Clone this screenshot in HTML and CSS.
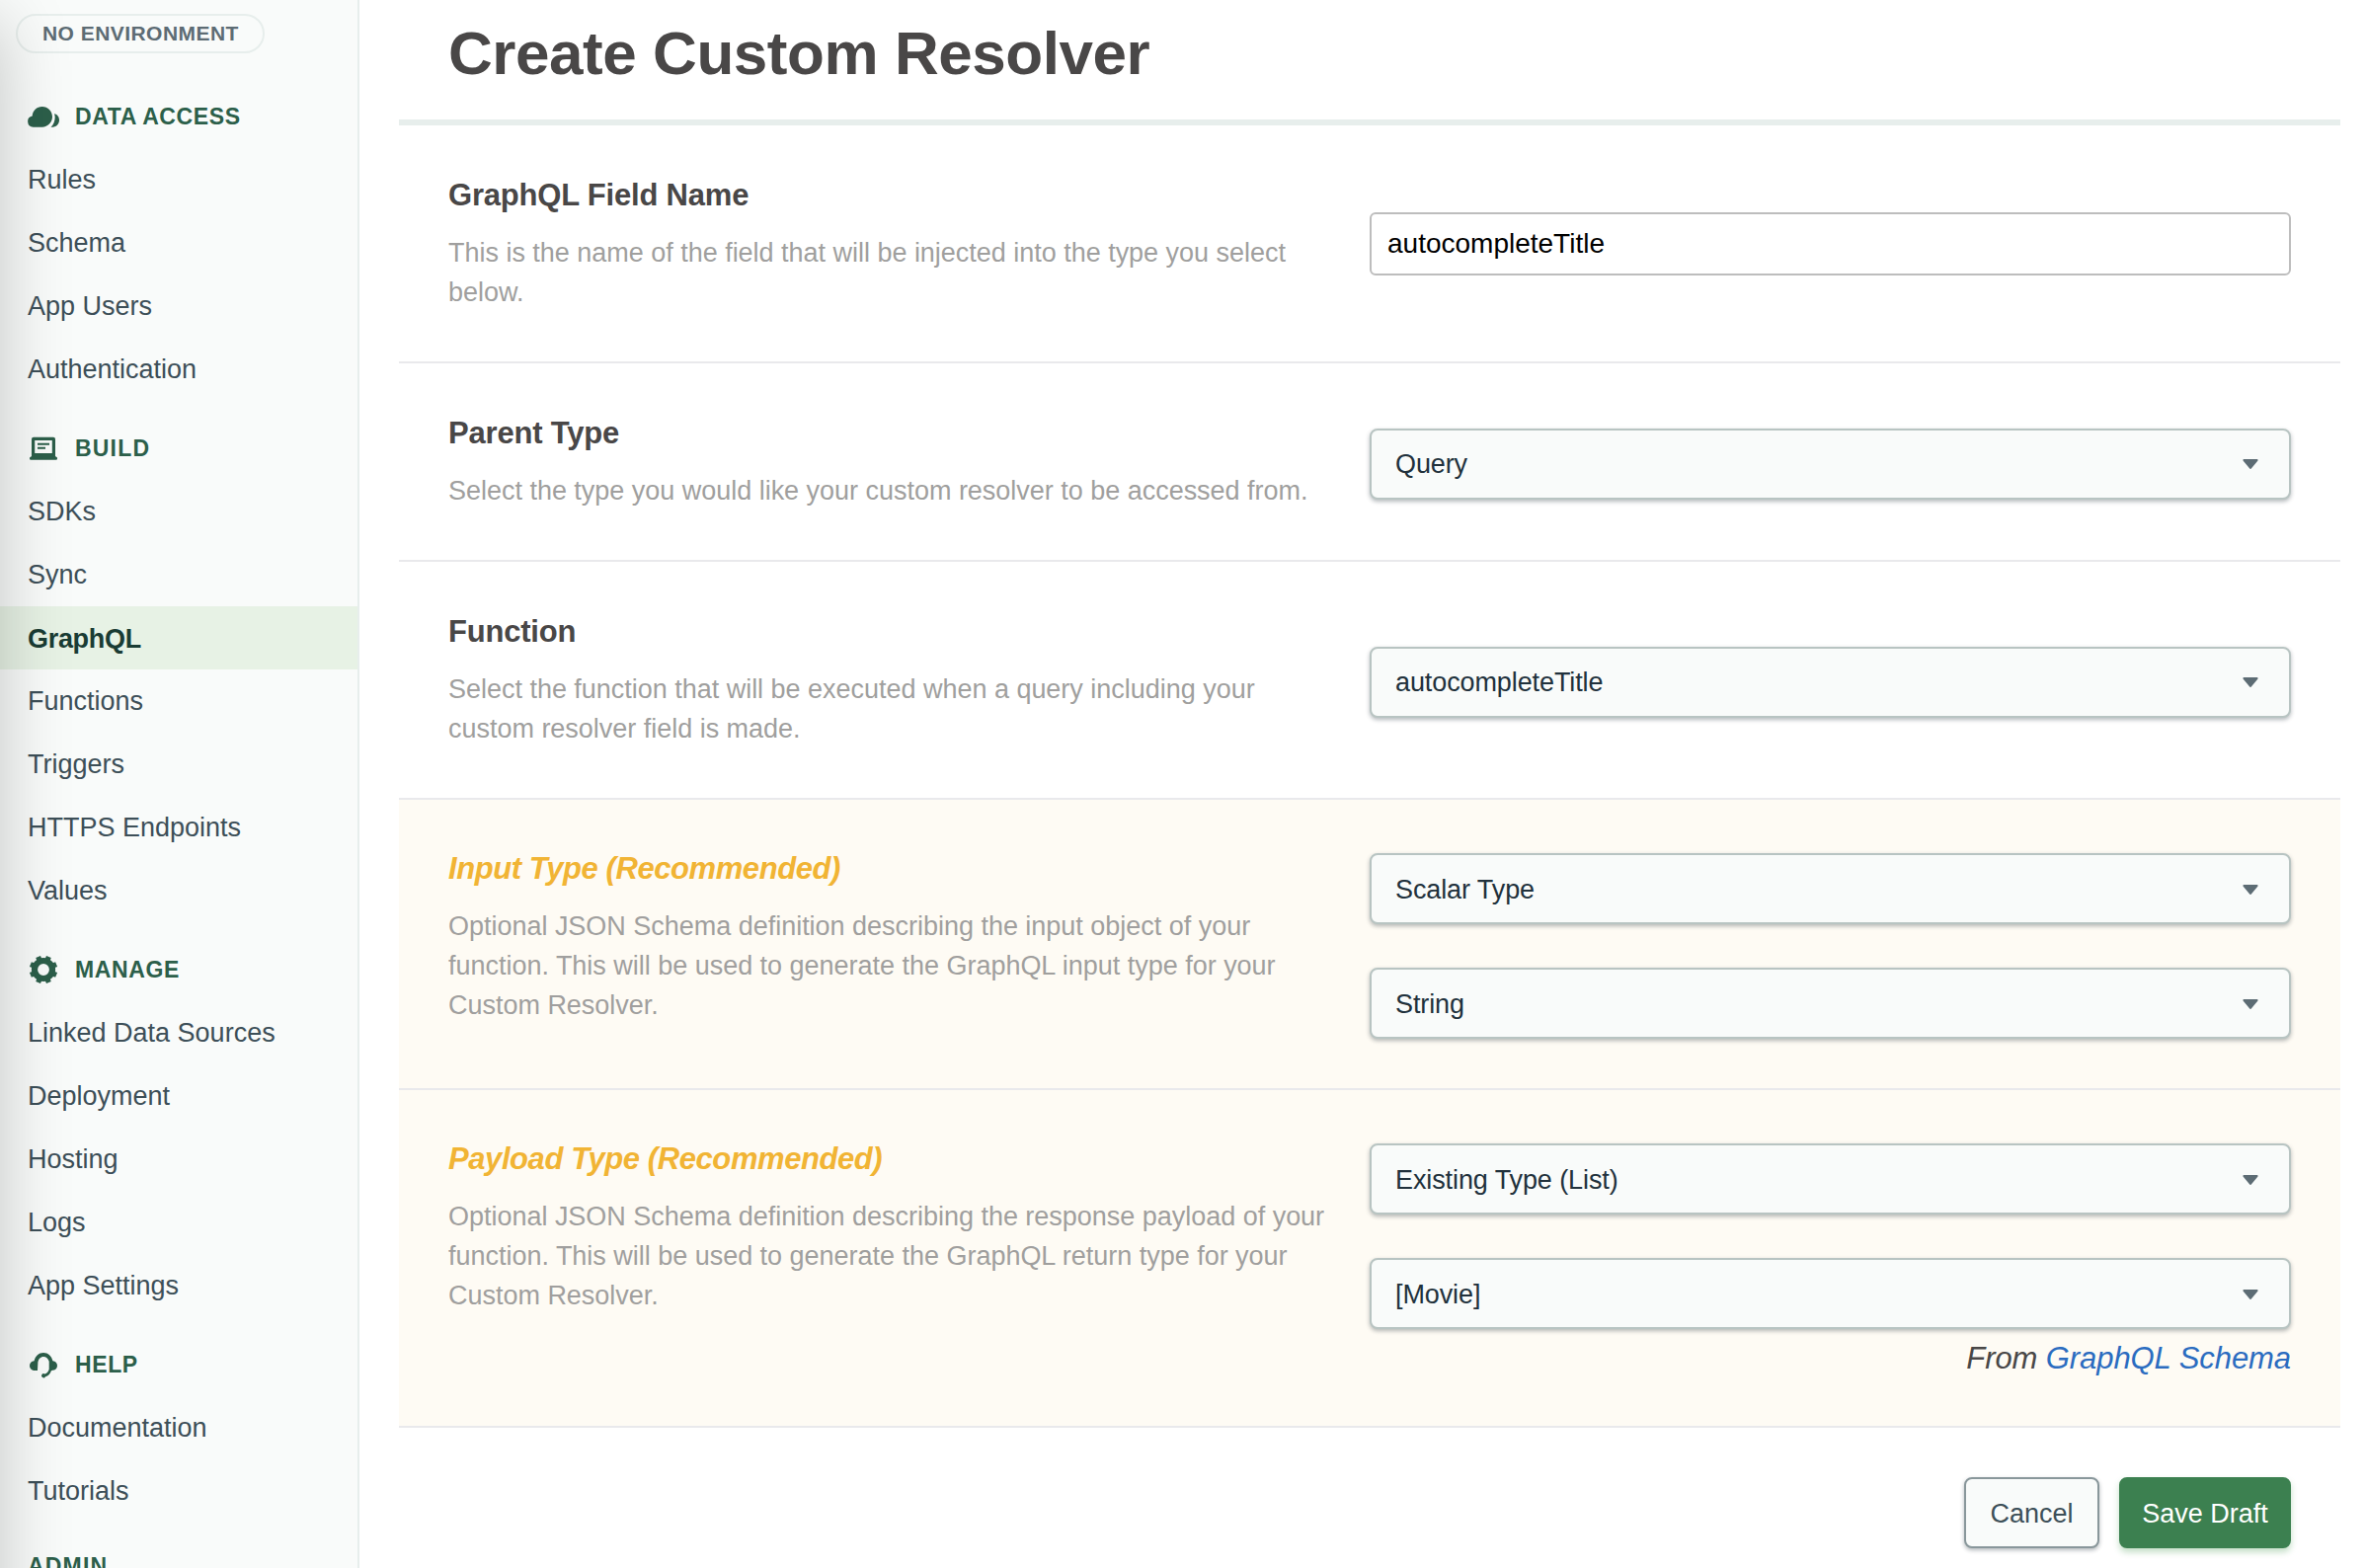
FILE: index.html
```html
<!DOCTYPE html>
<html lang="en">
<head>
<meta charset="utf-8">
<title>Create Custom Resolver</title>
<link rel="stylesheet" href="styles.css">
</head>
<body>
<div class="app">
  <nav class="sidebar">
    <div class="env">NO ENVIRONMENT</div>
    <div class="group group-first">
      <svg class="icon" viewBox="0 0 32 32" fill="currentColor"><path d="M5.600 26.700A5.600 5.600 0 0 1 4.700 15.600C4.900 10.200 9.300 6 14.700 6 20.400 6 25 10.600 25 16.300s-4.600 10.400-10.300 10.400z"/><path d="M27 13.300c3 .5 5 3.100 5 6.300 0 4-2.800 7.100-6.600 7.100h-1.900c2.700-2.400 4.200-6 4.200-9.900 0-1.300-.3-2.400-.7-3.500z"/></svg>
      <span>DATA ACCESS</span>
    </div>
    <a class="link">Rules</a>
    <a class="link">Schema</a>
    <a class="link">App Users</a>
    <a class="link">Authentication</a>
    <div class="group group-short">
      <svg class="icon" viewBox="0 0 32 32"><path fill="currentColor" fill-rule="evenodd" d="M6 4.800h20a2 2 0 0 1 2 2V24l2 1.500v1a1.200 1.200 0 0 1-1.200 1.200H3.200A1.200 1.200 0 0 1 2 26.500v-1L4 24V6.800a2 2 0 0 1 2-2zM7.200 8v12.900h17.600V8z"/><path fill="currentColor" d="M10 10.700h12v2H10zM10 14.700h8v2h-8z"/></svg>
      <span>BUILD</span>
    </div>
    <a class="link">SDKs</a>
    <a class="link">Sync</a>
    <a class="link active">GraphQL</a>
    <a class="link">Functions</a>
    <a class="link">Triggers</a>
    <a class="link">HTTPS Endpoints</a>
    <a class="link">Values</a>
    <div class="group">
      <svg class="icon" viewBox="-16 -16 32 32" fill="none" stroke="currentColor"><circle r="9" stroke-width="6.200"/><path stroke-width="5.200" d="M3.800 9.200l1.600 3.900M-3.800 9.200l-1.600 3.900M3.800-9.200l1.600-3.900M-3.800-9.200l-1.600-3.900M9.200 3.800l3.900 1.600M-9.200 3.800l-3.900 1.600M9.200-3.800l3.900-1.600M-9.200-3.800l-3.900-1.600"/></svg>
      <span>MANAGE</span>
    </div>
    <a class="link">Linked Data Sources</a>
    <a class="link">Deployment</a>
    <a class="link">Hosting</a>
    <a class="link">Logs</a>
    <a class="link">App Settings</a>
    <div class="group">
      <svg class="icon" viewBox="0 0 32 32"><path fill="currentColor" d="M6.600 12.200C7.800 7.300 11.400 4 16 4s8.200 3.300 9.400 8.200c2.700.4 4.600 2.200 4.600 4.700 0 2.700-2.100 4.700-4.800 4.900l-1.300.4c-1.100 3.400-3.200 5.400-5.900 6a2.100 2.100 0 1 1-.6-2.700c2.400-.9 4-2.700 4.300-5V12.800C20.600 9.800 18.800 8 16 8s-5 2.200-5.600 5.600L10 22H7c-2.900-.2-5-2.300-5-5.100 0-2.500 1.900-4.300 4.600-4.700z"/></svg>
      <span>HELP</span>
    </div>
    <a class="link">Documentation</a>
    <a class="link">Tutorials</a>
    <div class="group group-plain group-short"><span>ADMIN</span></div>
  </nav>

  <main class="main">
    <header class="title-bar"><h1 class="title">Create Custom Resolver</h1></header>

    <section class="row">
      <div class="info">
        <h2 class="label">GraphQL Field Name</h2>
        <p class="help">This is the name of the field that will be injected into the type you select<br>below.</p>
      </div>
      <div class="control"><input class="input" type="text" value="autocompleteTitle"></div>
    </section>

    <section class="row">
      <div class="info">
        <h2 class="label">Parent Type</h2>
        <p class="help">Select the type you would like your custom resolver to be accessed from.</p>
      </div>
      <div class="control selects">
        <div class="select"><span>Query</span><svg class="caret" viewBox="0 0 16 10"><path d="M1.500 0h13a1 1 0 0 1 .8 1.700L8.800 9.500a1 1 0 0 1-1.600 0L.7 1.700A1 1 0 0 1 1.500 0z"/></svg></div>
      </div>
    </section>

    <section class="row">
      <div class="info">
        <h2 class="label">Function</h2>
        <p class="help">Select the function that will be executed when a query including your<br>custom resolver field is made.</p>
      </div>
      <div class="control selects">
        <div class="select"><span>autocompleteTitle</span><svg class="caret" viewBox="0 0 16 10"><path d="M1.500 0h13a1 1 0 0 1 .8 1.700L8.800 9.500a1 1 0 0 1-1.600 0L.7 1.700A1 1 0 0 1 1.500 0z"/></svg></div>
      </div>
    </section>

    <section class="row recommended">
      <div class="info">
        <h2 class="label">Input Type (Recommended)</h2>
        <p class="help">Optional JSON Schema definition describing the input object of your<br>function. This will be used to generate the GraphQL input type for your<br>Custom Resolver.</p>
      </div>
      <div class="control selects">
        <div class="select"><span>Scalar Type</span><svg class="caret" viewBox="0 0 16 10"><path d="M1.500 0h13a1 1 0 0 1 .8 1.700L8.800 9.500a1 1 0 0 1-1.600 0L.7 1.700A1 1 0 0 1 1.500 0z"/></svg></div>
        <div class="select"><span>String</span><svg class="caret" viewBox="0 0 16 10"><path d="M1.500 0h13a1 1 0 0 1 .8 1.700L8.800 9.500a1 1 0 0 1-1.600 0L.7 1.700A1 1 0 0 1 1.500 0z"/></svg></div>
      </div>
    </section>

    <section class="row recommended">
      <div class="info">
        <h2 class="label">Payload Type (Recommended)</h2>
        <p class="help">Optional JSON Schema definition describing the response payload of your<br>function. This will be used to generate the GraphQL return type for your<br>Custom Resolver.</p>
      </div>
      <div class="control selects">
        <div class="select"><span>Existing Type (List)</span><svg class="caret" viewBox="0 0 16 10"><path d="M1.500 0h13a1 1 0 0 1 .8 1.700L8.800 9.500a1 1 0 0 1-1.600 0L.7 1.700A1 1 0 0 1 1.500 0z"/></svg></div>
        <div class="select"><span>[Movie]</span><svg class="caret" viewBox="0 0 16 10"><path d="M1.500 0h13a1 1 0 0 1 .8 1.700L8.800 9.500a1 1 0 0 1-1.600 0L.7 1.700A1 1 0 0 1 1.500 0z"/></svg></div>
        <p class="source">From <a class="source-link">GraphQL Schema</a></p>
      </div>
    </section>

    <footer class="actions">
      <button class="btn cancel">Cancel</button>
      <button class="btn save">Save Draft</button>
    </footer>
  </main>
</div>
</body>
</html>
```

FILE: styles.css
```css
* { box-sizing: border-box; }

body {
  margin: 0;
  height: 1588px;
  overflow: hidden;
  background: #fff;
  color: #494747;
  font-family: "Liberation Sans", Arial, sans-serif;
  font-size: 27px;
}

.app {
  display: flex;
  height: 1588px;
}

/* Sidebar */
.sidebar {
  position: relative;
  flex: none;
  width: 364px;
  height: 1588px;
  padding-top: 14px;
  overflow: hidden;
  background: #f9fbfa;
  border-right: 2px solid #e7eeec;
}

/* Soft shadow cast over the left edge */
.sidebar::after {
  content: "";
  position: absolute;
  left: -100px;
  top: 22px;
  width: 100px;
  height: 1800px;
  box-shadow: 0 0 72px rgba(0, 0, 0, 0.22);
  pointer-events: none;
}

.env {
  width: 252px;
  height: 40px;
  margin-left: 16px;
  border: 2px solid #e7eeec;
  border-radius: 20px;
  color: #5d6c74;
  font-size: 21px;
  font-weight: 700;
  letter-spacing: 0.45px;
  line-height: 36px;
  padding-left: 25px;
  white-space: nowrap;
}

.group {
  display: flex;
  align-items: center;
  gap: 16px;
  height: 80px;
  padding: 16px 0 0 28px;
  color: #2c5f4a;
  font-size: 23px;
  font-weight: 700;
  letter-spacing: 0.6px;
}

.group-first { margin-top: 16px; }
.group-plain { padding-top: 9px; }
.group-short { letter-spacing: 1.2px; }

.icon {
  flex: none;
  width: 32px;
  height: 32px;
}

.link {
  display: block;
  height: 64px;
  padding-left: 28px;
  color: #3d4f58;
  line-height: 65px;
}

.active {
  background: #e7f2e5;
  color: #1a3c34;
  font-weight: 700;
  letter-spacing: -0.3px;
  line-height: 66px;
}

/* Form */
.main {
  flex: none;
  width: 1966px;
  margin-left: 40px;
}

.title-bar {
  height: 127px;
  padding-left: 50px;
  border-bottom: 6px solid #e7eeec;
}

.title {
  margin: 0;
  font-size: 62px;
  letter-spacing: -0.45px;
  line-height: 108px;
}

.row {
  display: flex;
  justify-content: space-between;
  align-items: center;
  padding: 50px;
  border-bottom: 2px solid #e9e9ec;
}

.recommended {
  align-items: flex-start;
  background: #fefbf4;
}

.label {
  margin: 0 0 17px;
  font-size: 31px;
  letter-spacing: -0.2px;
  line-height: 42px;
}

.recommended .label {
  margin-bottom: 18px;
  color: #f1b434;
  font-style: italic;
  letter-spacing: -0.42px;
  line-height: 40px;
}

.help {
  margin: 0;
  color: #a09f9e;
  letter-spacing: -0.02px;
  line-height: 40px;
  white-space: nowrap;
}

.control {
  flex: none;
  width: 933px;
}

.input {
  display: block;
  width: 100%;
  height: 64px;
  padding: 0 16px;
  border: 2px solid #bdbdbd;
  border-radius: 6px;
  outline: none;
  background: #fff;
  color: #000;
  font: 28px "Liberation Sans", Arial, sans-serif;
}

.selects { padding-top: 4px; }

.select {
  display: flex;
  align-items: center;
  justify-content: space-between;
  height: 72px;
  padding: 1px 31px 0 24px;
  border: 2px solid #b8c4c2;
  border-radius: 8px;
  background: #f9fbfa;
  box-shadow: 0 2px 4px rgba(6, 22, 33, 0.3);
  color: #21313c;
  letter-spacing: -0.1px;
}

.select span { padding-top: 1px; }

.select + .select { margin-top: 44px; }

.caret {
  width: 16px;
  height: 10px;
  fill: #5d6c74;
}

.source {
  margin: 8px 0 0;
  font-size: 31px;
  font-style: italic;
  letter-spacing: -0.08px;
  line-height: 43px;
  height: 40px;
  text-align: right;
}

.source-link { color: #2b6cc0; }

.actions {
  display: flex;
  justify-content: flex-end;
  gap: 20px;
  padding: 50px 50px 0;
}

.btn {
  height: 72px;
  padding: 2px 0 0;
  border: 2px solid #89979b;
  border-radius: 8px;
  font: 27px "Liberation Sans", Arial, sans-serif;
}

.cancel {
  width: 137px;
  background: #f9fbfa;
  color: #3d4f58;
  box-shadow: 0 2px 4px rgba(6, 22, 33, 0.3);
}

.save {
  width: 174px;
  border-color: #3c8050;
  background: #3c8050;
  color: #fff;
  box-shadow: 0 4px 6px rgba(60, 150, 70, 0.3);
}
```
